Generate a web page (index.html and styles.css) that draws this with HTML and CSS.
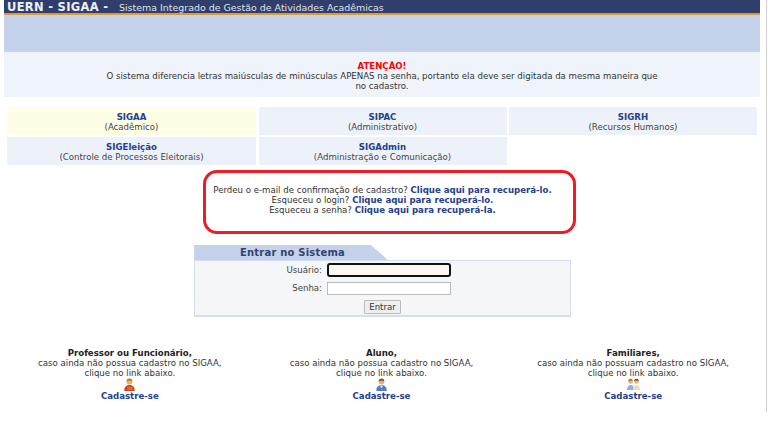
FILE: index.html
```html
<!DOCTYPE html>
<html lang="pt-BR">
<head>
<meta charset="utf-8">
<title>SIGAA</title>
<link rel="stylesheet" href="styles.css">
</head>
<body>
<div class="page">
  <header class="topbar"><span class="brand">UERN - SIGAA -</span><span class="subtitle">Sistema Integrado de Gestão de Atividades Acadêmicas</span></header>
  <div class="band"></div>
  <section class="notice">
    <strong>ATENÇÃO!</strong>
    <p>O sistema diferencia letras maiúsculas de minúsculas APENAS na senha, portanto ela deve ser digitada da mesma maneira que<br>no cadastro.</p>
  </section>
  <nav class="systems">
    <a class="sys current"><b>SIGAA</b><span>(Acadêmico)</span></a>
    <a class="sys"><b>SIPAC</b><span>(Administrativo)</span></a>
    <a class="sys"><b>SIGRH</b><span>(Recursos Humanos)</span></a>
    <a class="sys"><b>SIGEleição</b><span>(Controle de Processos Eleitorais)</span></a>
    <a class="sys"><b>SIGAdmin</b><span>(Administração e Comunicação)</span></a>
  </nav>
  <section class="recover">
    <div>Perdeu o e-mail de confirmação de cadastro? <a>Clique aqui para recuperá-lo.</a></div>
    <div>Esqueceu o login? <a>Clique aqui para recuperá-lo.</a></div>
    <div>Esqueceu a senha? <a>Clique aqui para recuperá-la.</a></div>
  </section>
  <section class="login">
    <div class="login-head"><h2>Entrar no Sistema</h2></div>
    <form class="login-body">
      <div class="row"><label>Usuário:</label><input class="field focus" type="text"></div>
      <div class="row"><label>Senha:</label><input class="field" type="password"></div>
      <div class="actions"><button type="button">Entrar</button></div>
    </form>
  </section>
  <section class="signup">
    <div class="col">
      <h3>Professor ou Funcionário,</h3>
      <p>caso ainda não possua cadastro no SIGAA,<br>clique no link abaixo.</p>
      <svg class="icon" viewBox="0 0 14 14"><path d="M1.500 14c-.5-4 2-6.500 5.500-6.500s6 2.500 5.500 6.500z" fill="#c8431a"/><path d="M4 10.500c1-1.500 4-1.800 6-.7l.8 3.200H5z" fill="#e2682c"/><circle cx="7" cy="4" r="3.100" fill="#eeb05c"/><path d="M3.800 3.800C3.800 1.500 5.500.4 7.200.5c1.800.1 3 1.300 3 3-1.500-.8-4-1.200-6.400.3z" fill="#b9761f"/></svg>
      <a>Cadastre-se</a>
    </div>
    <div class="col">
      <h3>Aluno,</h3>
      <p>caso ainda não possua cadastro no SIGAA,<br>clique no link abaixo.</p>
      <svg class="icon" viewBox="0 0 14 14"><path d="M1.500 14c-.5-4 2-6.500 5.500-6.500s6 2.500 5.500 6.500z" fill="#4f7fc4"/><path d="M5 8h4l-2 3z" fill="#dfe9f6"/><circle cx="7" cy="4" r="3" fill="#e7ad84"/><path d="M3.900 3.700C3.800 1.500 5.500.5 7.100.5c1.800 0 3.100 1.200 3 3.200-1.300-1-4.500-1.200-6.200 0z" fill="#8a5433"/></svg>
      <a>Cadastre-se</a>
    </div>
    <div class="col">
      <h3>Familiares,</h3>
      <p>caso ainda não possuam cadastro no SIGAA,<br>clique no link abaixo.</p>
      <svg class="icon" viewBox="0 0 14 14"><path d="M0 13c0-3.500 1.500-5.500 4-5.500s3.500 2 3.500 5.500z" fill="#8fb3de"/><path d="M6.500 13c0-3.500 1.500-5.500 4-5.500s3.500 2 3.500 5.500z" fill="#e9dfb8"/><circle cx="3.800" cy="3.800" r="2.500" fill="#e8b184"/><circle cx="10.200" cy="3.800" r="2.500" fill="#e8b184"/><path d="M1.300 3.200C1.500 1.500 2.600.8 3.900.8s2.300.8 2.400 2.400c-1.400-.8-3.300-.8-5 0z" fill="#a9702c"/><path d="M7.700 3.200C7.900 1.500 9 .8 10.300.8s2.300.8 2.400 2.400c-1.400-.8-3.300-.8-5 0z" fill="#7a4a22"/></svg>
      <a>Cadastre-se</a>
    </div>
  </section>
</div>
</body>
</html>
```
FILE: styles.css
```css
* { box-sizing: border-box; }
html, body { margin: 0; height: 100%; background: #fff; overflow: hidden; }
body {
  font-family: "DejaVu Sans", Verdana, sans-serif;
  font-size: 8.600px;
  line-height: 10px;
  color: #333;
}
a { color: #24408c; font-weight: bold; }
.page {
  width: 767px;
  height: 412px;
  padding: 0 6px 0 4px;
  border-right: 1px solid #cfcfcf;
}
.topbar {
  height: 15px;
  display: flex;
  align-items: center;
  background: #2f3e6b;
  border-bottom: 2px solid #e09a35;
  padding: 2px 0 0 3px;
  color: #dfe3ee;
  overflow: hidden;
}
.brand { font: bold 11.500px/13px "DejaVu Sans", sans-serif; color: #eef0f6; letter-spacing: .3px; width: 112px; flex: none; }
.subtitle { font-size: 9.450px; line-height: 13px; }
.band { height: 37px; background: #c4d2eb; }
.notice {
  height: 45px;
  background: #eff3fa;
  text-align: center;
  padding-top: 9px;
}
.notice strong { display: block; color: #f00; }
.notice p { margin: 0; }
.systems {
  display: grid;
  grid-template-columns: 249px 248px 248px;
  column-gap: 2.500px;
  row-gap: 2px;
  margin: 10px 0 0 3px;
}
.sys {
  height: 28px;
  background: #edf2fa;
  text-align: center;
  padding-top: 5px;
  font-weight: normal;
}
.sys.current { background: #fefee6; }
.sys b { display: block; color: #24408c; }
.sys span { display: block; color: #444; }
.recover {
  width: 373px;
  height: 64px;
  margin: 5px 0 0 199px;
  border: 3px solid #ee1c25;
  border-radius: 14px;
  padding: 12px 14px 0 0;
  text-align: center;
  color: #333;
}
.login { width: 377px; margin: 11px 0 0 190px; }
.login-head {
  width: 194px;
  height: 15px;
  background: #c4d2eb;
  clip-path: polygon(0 0, 177px 0, 100% 100%, 0 100%);
  padding-left: 46px;
}
.login-head h2 { margin: 0; font-size: 10px; line-height: 16px; color: #36436e; letter-spacing: .2px; }
.login-body {
  height: 57px;
  background: #f5f6f8;
  border: 1px solid #d3def1;
  border-bottom-width: 2px;
}
.row { display: flex; align-items: center; height: 18px; }
.row label { width: 132px; text-align: right; padding-right: 5px; color: #444; }
.field { width: 124px; height: 13px; margin: 0; padding: 0; border: 1px solid #bbb; background: #fff; }
.field.focus { height: 14px; border: 2px solid #111; border-radius: 3px; background: #fdf8f2; }
.actions { text-align: center; margin-top: 3px; }
.actions button {
  width: 37px;
  height: 14px;
  padding: 0;
  font: 8.600px/12px "DejaVu Sans", sans-serif;
  color: #333;
  background: #efefef;
  border: 1px solid #bbb;
  border-radius: 1px;
}
.signup {
  display: grid;
  grid-template-columns: repeat(3, 1fr);
  width: 755px;
  margin-top: 31px;
}
.col { text-align: center; display: flex; flex-direction: column; align-items: center; }
.col h3 { margin: 0; font-size: 8.600px; line-height: 10px; color: #222; }
.col p { margin: 0; }
.icon { width: 13px; height: 13px; }
.col a { line-height: 10px; }
```
